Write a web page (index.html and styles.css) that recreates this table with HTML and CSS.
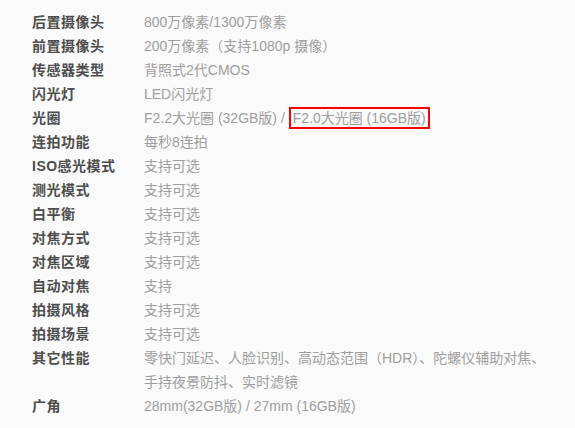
FILE: index.html
```html
<!DOCTYPE html>
<html lang="zh-CN">
<head>
    <meta charset="UTF-8">
    <meta name="viewport" content="width=device-width, initial-scale=1.0">
    <title>拍照参数</title>
    <link rel="stylesheet" href="styles.css">
</head>
<body>
    <div class="spec-list">
        <div class="spec-row"><span class="spec-name">后置摄像头</span><span class="spec-value">800万像素/1300万像素</span></div>
        <div class="spec-row"><span class="spec-name">前置摄像头</span><span class="spec-value">200万像素（支持1080p 摄像）</span></div>
        <div class="spec-row"><span class="spec-name">传感器类型</span><span class="spec-value">背照式2代CMOS</span></div>
        <div class="spec-row"><span class="spec-name">闪光灯</span><span class="spec-value">LED闪光灯</span></div>
        <div class="spec-row"><span class="spec-name">光圈</span><span class="spec-value">F2.2大光圈 (32GB版) / <span class="mark">F2.0大光圈 (16GB版)</span></span></div>
        <div class="spec-row"><span class="spec-name">连拍功能</span><span class="spec-value">每秒8连拍</span></div>
        <div class="spec-row"><span class="spec-name">ISO感光模式</span><span class="spec-value">支持可选</span></div>
        <div class="spec-row"><span class="spec-name">测光模式</span><span class="spec-value">支持可选</span></div>
        <div class="spec-row"><span class="spec-name">白平衡</span><span class="spec-value">支持可选</span></div>
        <div class="spec-row"><span class="spec-name">对焦方式</span><span class="spec-value">支持可选</span></div>
        <div class="spec-row"><span class="spec-name">对焦区域</span><span class="spec-value">支持可选</span></div>
        <div class="spec-row"><span class="spec-name">自动对焦</span><span class="spec-value">支持</span></div>
        <div class="spec-row"><span class="spec-name">拍摄风格</span><span class="spec-value">支持可选</span></div>
        <div class="spec-row"><span class="spec-name">拍摄场景</span><span class="spec-value">支持可选</span></div>
        <div class="spec-row"><span class="spec-name">其它性能</span><span class="spec-value">零快门延迟、人脸识别、高动态范围（HDR）、陀螺仪辅助对焦、手持夜景防抖、实时滤镜</span></div>
        <div class="spec-row"><span class="spec-name">广角</span><span class="spec-value">28mm(32GB版) / 27mm (16GB版)</span></div>
    </div>
</body>
</html>
```

FILE: styles.css
```css
* {
    margin: 0;
    padding: 0;
    box-sizing: border-box;
}
body {
    font-family: 'Liberation Sans', 'Noto Sans CJK SC', sans-serif;
    font-size: 14px;
    background: #fafafa;
}
.spec-list {
    padding: 10px 0 0 32px;
}
.spec-row {
    display: grid;
    grid-template-columns: 112px 410px;
    line-height: 24px;
}
.spec-name {
    color: #4d4d4d;
    font-weight: bold;
    letter-spacing: 0.5px;
}
.spec-value {
    color: #9e9e9e;
}
.mark {
    display: inline-block;
    line-height: 16px;
    padding: 1px 2px;
    border: 2px solid #f00;
}
```
